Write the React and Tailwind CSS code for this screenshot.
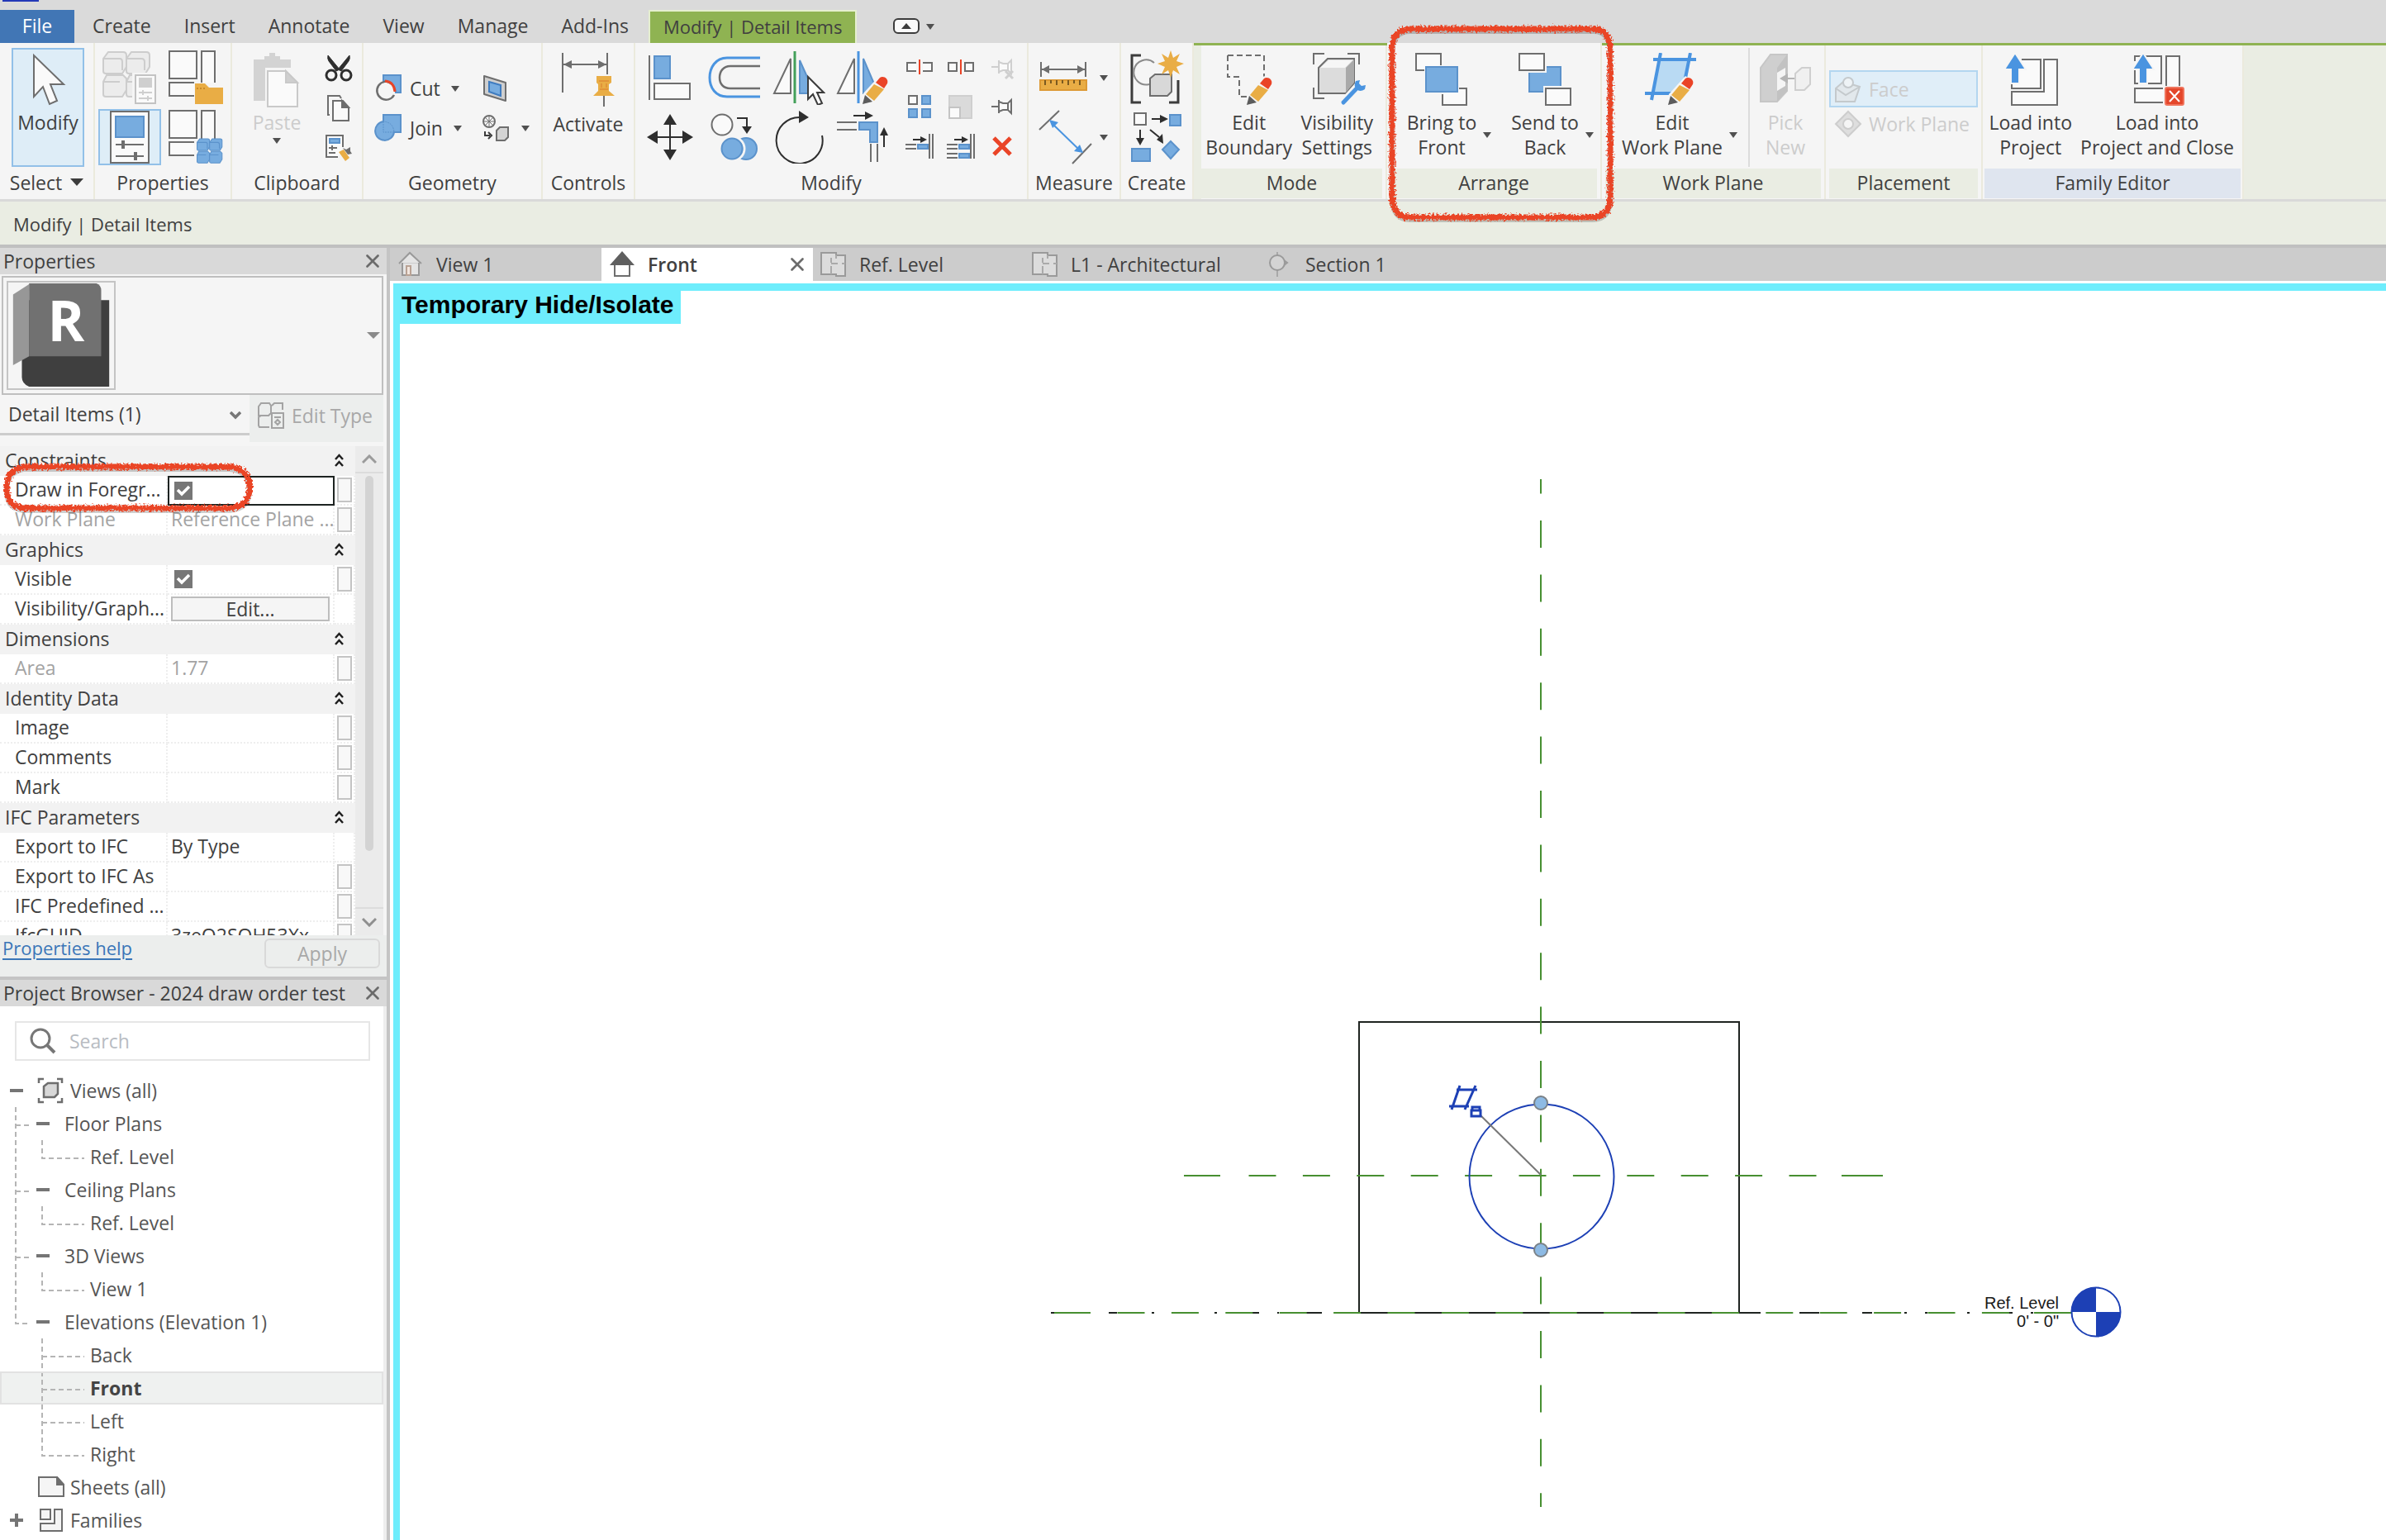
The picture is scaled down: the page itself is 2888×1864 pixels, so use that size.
import { X } from "lucide-react";

const GRAY = "#6e6e6e";
const DARK = "#3c3c3c";
const BLUE = "#77acdf";
const EDGE = "#5b92cb";
const SKY = "#4a94e0";
const GOLD = "#e9ad45";
const RED = "#ea4427";

const tabs = ["Create", "Insert", "Annotate", "View", "Manage", "Add-Ins"];

const properties = [
  { group: "Constraints" },
  { name: "Draw in Foregr...", type: "check", active: true, assoc: true },
  { name: "Work Plane", value: "Reference Plane ...", muted: true, assoc: true },
  { group: "Graphics" },
  { name: "Visible", type: "check", assoc: true },
  { name: "Visibility/Graph...", type: "edit" },
  { group: "Dimensions" },
  { name: "Area", value: "1.77", muted: true, assoc: true },
  { group: "Identity Data" },
  { name: "Image", value: "", assoc: true },
  { name: "Comments", value: "", assoc: true },
  { name: "Mark", value: "", assoc: true },
  { group: "IFC Parameters" },
  { name: "Export to IFC", value: "By Type" },
  { name: "Export to IFC As", value: "", assoc: true },
  { name: "IFC Predefined ...", value: "", assoc: true },
  { name: "IfcGUID", value: "3zeO2SQH53Xx...", assoc: true },
];

const tree = [
  { label: "Floor Plans", depth: 1 },
  { label: "Ref. Level", depth: 2, last: true, trunk: true },
  { label: "Ceiling Plans", depth: 1 },
  { label: "Ref. Level", depth: 2, last: true, trunk: true },
  { label: "3D Views", depth: 1 },
  { label: "View 1", depth: 2, last: true, trunk: true },
  { label: "Elevations (Elevation 1)", depth: 1, last: true },
  { label: "Back", depth: 2 },
  { label: "Front", depth: 2, selected: true },
  { label: "Left", depth: 2 },
  { label: "Right", depth: 2, last: true },
];

function Icon({ w = 64, h = 64, children }) {
  return (
    <svg width={w} height={h} viewBox={`0 0 ${w} ${h}`} fill="none" stroke={GRAY} strokeWidth="2" className="shrink-0" aria-hidden="true">
      {children}
    </svg>
  );
}

function Caret({ wide }) {
  return wide ? (
    <svg width="16" height="10" viewBox="0 0 16 10" className="shrink-0"><path d="M0 0h16L8 9z" fill={DARK} /></svg>
  ) : (
    <svg width="10" height="7" viewBox="0 0 10 7" className="shrink-0"><path d="M0 0h10L5 7z" fill="#505050" /></svg>
  );
}

function Pencil() {
  return (
    <g stroke="none">
      <path d="M29 50L49 28l13 8-1 12-19 16-16 1z" fill="#f5f5f5" />
      <path d="M32 51L42 39l12 6-12 14z" fill={GOLD} />
      <path d="M44 37l5-6c4-3 11 1 9 7l-4 6z" fill={RED} />
      <path d="M28 63l3-11 9 8z" fill="#5c5c5c" />
    </g>
  );
}

/* ---------- ribbon icons ---------- */

const CursorIcon = () => (
  <Icon w={64} h={64}><path d="M15 3v50l11-12 8 21 9-4-8-20h16z" fill="#fafafa" /></Icon>
);

const Cubes = ({ fill, edge, x = 0, y = 0 }) => (
  <g transform={`translate(${x} ${y})`} fill={fill} stroke={edge}>
    <path d="M1 10l6-8h18q4 0 4 4v14l-5 8H4q-3 0-3-3z" />
    <path d="M29 10l6-8h18q4 0 4 4v14l-5 8H32q-3 0-3-3z" />
    <path d="M1 38l4-8h20l4 4v14l-5 8H4q-3 0-3-3z" />
    <path d="M29 38l4-8h20l4 4v14l-5 8H32q-3 0-3-3z" />
    <path d="M1 10h20q3 0 3 4v10M29 10h18q4 0 4 4v10M1 38h20M29 38h20" fill="none" />
  </g>
);

const FamilyTypesIcon = () => (
  <Icon w={66} h={66}>
    <Cubes fill="#ececec" edge="#cdcdcd" />
    <rect x="36" y="27" width="31" height="40" fill="#f5f5f5" stroke="none" />
    <rect x="40" y="30" width="24" height="34" fill="#fafafa" stroke="#c3c3c3" />
    <rect x="44" y="33" width="16" height="12" fill="#cfcfcf" stroke="none" />
    <path d="M44 51h16M44 58h16M49 48v6M55 55v6" stroke="#cfcfcf" />
  </Icon>
);

const PropertiesIcon = () => (
  <Icon w={50} h={66}>
    <rect x="2" y="2" width="46" height="62" fill="#fafafa" />
    <rect x="8" y="8" width="34" height="25" fill={BLUE} stroke={EDGE} />
    <path d="M8 42h34M8 56h34" />
    <path d="M17 37v10M32 51v10" strokeWidth="4" />
  </Icon>
);

const CategoryIcon = ({ children }) => (
  <Icon w={66} h={66}>
    <rect x="1" y="1" width="33" height="33" fill="#fafafa" />
    <path d="M40 39V1h16v38" fill="#fafafa" />
    <path d="M31 55H1V39h30" fill="#fafafa" />
    {children}
  </Icon>
);

const PasteIcon = () => (
  <Icon w={56} h={66}>
    <path d="M0 8h13V4h6V0h7v4h6v4h13v10H14v40H0z" fill="#d3d3d3" stroke="none" />
    <path d="M17 22h22l14 14v29H17z" fill="#fafafa" stroke="#c9c9c9" />
    <path d="M39 22v14h14z" fill="#cfcfcf" stroke="#c9c9c9" />
  </Icon>
);

const ScissorsIcon = () => (
  <Icon w={34} h={34}>
    <path d="M4 1q-1 4 1 7l9 12 4-2zM30 1q1 4-1 7l-9 12-4-2z" fill="#2e2e2e" stroke="#2e2e2e" strokeWidth="1" />
    <circle cx="8" cy="25" r="6" stroke="#2e2e2e" strokeWidth="3" />
    <circle cx="26" cy="25" r="6" stroke="#2e2e2e" strokeWidth="3" />
  </Icon>
);

const CopyIcon = () => (
  <Icon w={34} h={34}>
    <path d="M6 25H4V2h14l2 3" />
    <path d="M10 8h12l7 8v16H10z" fill="#fafafa" />
    <path d="M21 8v8h8z" fill={GRAY} />
  </Icon>
);

const MatchIcon = () => (
  <Icon w={34} h={34}>
    <path d="M16 28H2V2h20v14" fill="#fafafa" />
    <rect x="6" y="6" width="12" height="5" fill={BLUE} stroke={EDGE} />
    <path d="M5 17h10M5 23h8M9 14v6" />
    <path d="M17 22l6-3 7 10-5 4z" fill={GOLD} stroke="none" />
    <path d="M22 17l4 2 5-3v5l2 3-5 1z" fill={GRAY} stroke="none" />
  </Icon>
);

const CutGeometryIcon = () => (
  <Icon w={34} h={34}>
    <path d="M11 1h21v21h-6Q25 10 11 8z" fill={BLUE} stroke={EDGE} />
    <path d="M21 11a11 11 0 1 0 3 14" strokeWidth="2.5" />
    <path d="M13 8q11 1 12 13" stroke={RED} strokeWidth="3" />
  </Icon>
);

const JoinIcon = () => (
  <Icon w={34} h={34}>
    <path d="M11 1h21v21h-8a11.500 11.500 0 1 1-13-13z" fill={BLUE} stroke={EDGE} />
    <path d="M11 9v13h13q-1-12-13-13" stroke={EDGE} strokeDasharray="2 1" strokeWidth="1" />
  </Icon>
);

const WallOpeningIcon = () => (
  <Icon w={34} h={34}>
    <path d="M3 2l26 8v22L3 24z" fill="#cfcfcf" strokeLinejoin="round" />
    <path d="M9 9l14 4v13L9 21z" fill={BLUE} stroke="#3f7cc0" />
  </Icon>
);

const PaintIcon = () => (
  <Icon w={34} h={34}>
    <circle cx="9" cy="9" r="7" fill="#fafafa" />
    <path d="M4 4l10 10M14 4L4 14M9 2v14M2 9h14" strokeWidth="1" />
    <path d="M4 21v5h6M8 22l4 4-4 4" stroke={DARK} />
    <path d="M18 20l4-4h10v12l-4 4H18z" fill="#d4d4d4" />
  </Icon>
);

const ActivateIcon = () => (
  <Icon w={66} h={66}>
    <path d="M2 0v48M56 0v26M2 14h54" />
    <path d="M3 14l10-5v10zM55 14l-10-5v10z" fill={GRAY} stroke="none" />
    <path d="M43 28h18v8l-3 2v8l7 6H39l6-6v-8l-2-2z" fill={GOLD} stroke="none" />
    <path d="M46 34h12M47 44h10M49 37v5M55 37v5" stroke="#d97c2f" strokeWidth="1" />
    <path d="M52 52v13" />
  </Icon>
);

const AlignIcon = () => (
  <Icon w={56} h={56}>
    <path d="M3 1v54" />
    <rect x="9" y="2" width="19" height="27" fill={BLUE} stroke={EDGE} />
    <rect x="9" y="35" width="43" height="19" fill="#fafafa" />
  </Icon>
);

const OffsetIcon = () => (
  <Icon w={66} h={56}>
    <path d="M64 4H24C10 4 3 16 3 28s7 23 21 23h40" stroke={SKY} strokeWidth="3" />
    <path d="M64 14H28c-9 0-13 7-13 14s4 13 13 13h36" strokeWidth="2.500" />
  </Icon>
);

const MirrorPickIcon = () => (
  <Icon w={64} h={66}>
    <path d="M22 10v42H2z" fill="#fafafa" />
    <path d="M33 12l18 40H33z" fill={BLUE} stroke={EDGE} />
    <path d="M27 1v63" stroke="#43a05a" strokeWidth="3" />
    <path d="M43 32v27l6-6 6 13 5-2-6-13h8z" fill="#fff" stroke={DARK} />
  </Icon>
);

const MirrorDrawIcon = () => (
  <Icon w={66} h={66}>
    <path d="M22 10v42H2z" fill="#fafafa" />
    <path d="M33 10l18 42H33z" fill={BLUE} stroke={EDGE} />
    <path d="M27 1v63" stroke={SKY} strokeWidth="3" />
    <g transform="translate(4 2)"><Pencil /></g>
  </Icon>
);

const MoveIcon = () => (
  <Icon w={56} h={56}>
    <path d="M28 6v44M6 28h44" stroke="#2e2e2e" />
    <path d="M28 0l8 13H20zM28 56l8-13H20zM0 28l13-8v16zM56 28l-13-8v16z" fill="#2e2e2e" stroke="none" />
  </Icon>
);

const CopyShapeIcon = () => (
  <Icon w={62} h={58}>
    <circle cx="16" cy="14" r="12.500" fill="#fafafa" />
    <path d="M34 6h12v12" stroke="#2e2e2e" />
    <path d="M40 16h12l-6 9z" fill="#2e2e2e" stroke="none" />
    <circle cx="45" cy="43" r="13" fill={BLUE} stroke={EDGE} />
    <circle cx="29" cy="43" r="14" fill={BLUE} stroke="#f5f5f5" strokeWidth="3" />
    <circle cx="28" cy="43" r="12.500" fill={BLUE} stroke={EDGE} />
  </Icon>
);

const RotateIcon = () => (
  <Icon w={60} h={64}>
    <path d="M58 30a28 28 0 1 1-26-22" stroke="#2e2e2e" />
    <path d="M30 0l12 8-12 7z" fill="#2e2e2e" stroke="none" />
  </Icon>
);

const TrimIcon = () => (
  <Icon w={64} h={64}>
    <path d="M20 6h16" stroke="#2e2e2e" />
    <path d="M34 1l10 5-10 5z" fill="#2e2e2e" stroke="none" />
    <path d="M0 14h24M0 23h24M41 40v22M49 40v22" />
    <path d="M27 14h22v24H40V23H27z" fill={BLUE} stroke={EDGE} />
    <path d="M57 44V28" stroke="#2e2e2e" />
    <path d="M52 30l5-10 5 10z" fill="#2e2e2e" stroke="none" />
  </Icon>
);

const SplitIcon = ({ gap }) => (
  <Icon w={34} h={34}>
    {gap ? (
      <path d="M2 12h10v10H2zM22 12h10v10H22z" fill="#fafafa" />
    ) : (
      <path d="M13 12H2v10h11M21 12h11v10H21" fill="#fafafa" />
    )}
    <path d="M17 8v18" stroke={RED} />
  </Icon>
);

const ArrayIcon = () => (
  <Icon w={34} h={34}>
    <rect x="4" y="4" width="10" height="10" fill="#fafafa" />
    <path d="M20 4h10v10H20zM4 20h10v10H4zM20 20h10v10H20z" fill={BLUE} stroke={EDGE} />
  </Icon>
);

const ScaleIcon = () => (
  <Icon w={34} h={34}>
    <rect x="3" y="4" width="27" height="27" fill="#dadada" stroke="#cfcfcf" />
    <rect x="3" y="18" width="13" height="13" fill="#fafafa" stroke="#c4c4c4" />
  </Icon>
);

const PinIcon = ({ off }) => (
  <Icon w={34} h={34}>
    <g stroke={off ? "#cfcfcf" : GRAY}>
      <path d="M4 17h9M13 9v16M13 11l5 2h6l4-4v16l-4-4h-6l-5 2M24 13v8" fill="#fafafa" />
      {off && <path d="M21 22l9 9M30 22l-9 9" strokeWidth="3" />}
    </g>
  </Icon>
);

const TrimSingleIcon = ({ multi }) => (
  <Icon w={34} h={34}>
    <path d="M9 9h10" stroke="#2e2e2e" />
    <path d="M18 5l8 4-8 4z" fill="#2e2e2e" stroke="none" />
    <path d="M29 2v30M33 2v30" />
    <path d="M0 15h13M0 20h13" />
    <path d="M15 15h12v5H15z" fill={BLUE} stroke={EDGE} />
    {multi && <path d="M0 26h13M0 31h13" />}
    {multi && <path d="M15 26h12v5H15z" fill={BLUE} stroke={EDGE} />}
  </Icon>
);

const DeleteIcon = () => (
  <Icon w={34} h={34}><path d="M7 7l20 20M27 7L7 27" stroke={RED} strokeWidth="5" /></Icon>
);

const RulerIcon = () => (
  <Icon w={60} h={40}>
    <path d="M3 1v18M57 1v18M4 10h52" />
    <path d="M4 10l9-5v10zM56 10l-9-5v10z" fill={GRAY} stroke="none" />
    <rect x="2" y="23" width="56" height="12" fill={GOLD} stroke="#dd9a35" />
    <path d="M8 23v6M15 23v4M22 23v6M29 23v4M36 23v6M43 23v4M50 23v6" stroke="#7b5a20" />
  </Icon>
);

const DimensionIcon = () => (
  <Icon w={66} h={66}>
    <path d="M25 1L1 24M64 41L41 65" />
    <path d="M17 17l32 31" stroke={SKY} />
    <path d="M13 12l11 3-7 7zM54 52l-11-2 7-8z" fill={SKY} stroke="none" />
  </Icon>
);

const CreateGroupIcon = () => (
  <Icon w={66} h={66}>
    <path d="M14 6H3v57h11M48 63h11V36" stroke={DARK} strokeWidth="3" />
    <path d="M30 15a15 15 0 1 0-6 26" stroke="#8a8a8a" />
    <path d="M25 34l6-5h20v21l-5 5H25z" fill="#d8d8d8" />
    <path d="M50 0l3 9 8-5-4 9 9 3-9 4 4 9-8-5-3 9-3-9-8 5 4-9-9-4 9-3-4-9 8 5z" fill={GOLD} stroke="none" />
  </Icon>
);

const CreateSimilarIcon = () => (
  <Icon w={64} h={62}>
    <rect x="5" y="2" width="14" height="14" fill="#fafafa" />
    <rect x="48" y="4" width="13" height="13" fill={BLUE} stroke={EDGE} />
    <path d="M26 9h12M12 22v12M24 22l11 9" stroke="#2e2e2e" />
    <path d="M36 4l10 5-10 5zM7 32h10l-5 9zM32 34l7-7 1 12z" fill="#2e2e2e" stroke="none" />
    <rect x="2" y="45" width="22" height="15" fill={BLUE} stroke={EDGE} />
    <path d="M49 36l10 10-10 11-10-11z" fill={BLUE} stroke={EDGE} />
  </Icon>
);

const EditBoundaryIcon = () => (
  <Icon>
    <path d="M5 3h44v26M5 3v26h14v24h9" strokeDasharray="7 4" />
    <Pencil />
  </Icon>
);

const VisibilityIcon = () => (
  <Icon>
    <path d="M1 14V1h13M42 1h14v13M1 42v13h13" />
    <path d="M7 18L18 7h32v30L40 49H7z" fill="#dcdcdc" />
    <path d="M40 18L50 8v28L40 48z" fill="#a9a9a9" stroke="none" />
    <path d="M9 18L19 9h29l-9 9z" fill="#f6f6f6" stroke="none" />
    <path d="M37 60l18-20" stroke="#f5f5f5" strokeWidth="10" />
    <path d="M37 60l18-19" stroke={SKY} strokeWidth="5" strokeLinecap="round" />
    <path d="M52 34q-3 6 1 10t10 0l1-5-5 1-3-3 1-4z" fill={SKY} stroke="none" />
  </Icon>
);

const BringFrontIcon = () => (
  <Icon>
    <path d="M11 21H1V1h30v14" fill="#fafafa" />
    <path d="M53 43h9v20H33V50" fill="#fafafa" />
    <rect x="13" y="17" width="38" height="30" fill={BLUE} stroke={EDGE} />
  </Icon>
);

const SendBackIcon = () => (
  <Icon>
    <rect x="13" y="17" width="38" height="30" fill={BLUE} stroke={EDGE} />
    <path d="M-1-1h35v25H-1zM30 40h34v24H30z" fill="#f5f5f5" stroke="none" />
    <rect x="1" y="1" width="30" height="20" fill="#fafafa" />
    <rect x="33" y="43" width="30" height="20" fill="#fafafa" />
  </Icon>
);

const WorkPlaneIcon = () => (
  <Icon w={66}>
    <path d="M17 8h38L48 49H9z" fill="#b9daf3" stroke="none" />
    <path d="M10 8h52M0 49h46M19 0L8 57M55 0l-6 30" stroke={SKY} strokeWidth="4" />
    <Pencil />
  </Icon>
);

const PickNewIcon = () => (
  <Icon>
    <path d="M2 18L14 2h20v44L22 59H2z" fill="#cfcfcf" stroke="#c6c6c6" />
    <path d="M22 18L34 2v44L22 59z" fill="#c2c2c2" stroke="none" />
    <path d="M22 24l10-6v22l-10 6z" fill="#f5f5f5" stroke="none" />
    <path d="M30 31h14" stroke="#b5b5b5" />
    <path d="M25 31l10-6v12z" fill="#b5b5b5" stroke="none" />
    <path d="M44 25l8-7h10v20l-7 7H44z" fill="#f0f0f0" stroke="#cfcfcf" />
  </Icon>
);

const FaceIcon = () => (
  <Icon w={34} h={34}>
    <path d="M2 16l9-8 20 6-6 18H2z" fill="#e2e8ec" stroke="#c4c9cc" />
    <path d="M2 16l12 8 17-10" stroke="#c4c9cc" />
    <circle cx="17" cy="9" r="6" fill="#eef3f6" stroke="#c4c9cc" />
  </Icon>
);

const PlaneIcon = () => (
  <Icon w={34} h={34}>
    <path d="M17 2l15 15-15 15L2 17z" fill="#dedede" stroke="#cdcdcd" />
    <circle cx="17" cy="17" r="6" fill="#f5f5f5" stroke="#cdcdcd" />
  </Icon>
);

const LoadIcon = () => (
  <Icon>
    <path d="M20 8h23v35H8v-5M8 47h39V8h16v55H8z" fill="#fafafa" />
    <path d="M12 0l13 20h-8v17H7V20H-1z" fill={SKY} stroke="#f5f5f5" strokeWidth="2" />
  </Icon>
);

const LoadCloseIcon = () => (
  <Icon>
    <path d="M2 10V4h32v33H2V16" fill="#fafafa" />
    <path d="M40 40V4h16v36M36 60H2V43h34" fill="#fafafa" />
    <path d="M12 0l13 20h-8v17H7V20H-1z" fill={SKY} stroke="#f5f5f5" strokeWidth="2" />
    <rect x="39" y="42" width="22" height="21" rx="2" fill="#e4472b" stroke="#f0745c" />
    <path d="M44 46l12 13M56 46L44 59" stroke="#fff" />
  </Icon>
);

/* ---------- ribbon pieces ---------- */

function Group({ title, className, strip, children }) {
  return (
    <section className={`flex flex-col shrink-0 border-r-2 border-[#ebeadd] bg-[#f5f5f5] ${className}`}>
      <div className="flex h-[152px]">{children}</div>
      <h2 className={`flex h-9 items-center justify-center gap-2.5 pb-0.5 whitespace-nowrap ${strip || ""}`}>{title}</h2>
    </section>
  );
}

function BigButton({ icon, lines, caret, disabled, className }) {
  return (
    <button disabled={disabled} className={`flex flex-col items-center pt-3 ${disabled ? "text-[#cccccc]" : ""} ${className || ""}`}>
      {icon}
      <span className="mt-[5px] grid w-full grid-cols-[1fr_auto_1fr] items-center leading-[30px] whitespace-nowrap">
        <span />
        <span>{lines.map((line) => <span key={line} className="block">{line}</span>)}</span>
        <span className="pl-2">{caret && <Caret />}</span>
      </span>
    </button>
  );
}

function IconButton({ label, className, children }) {
  return (
    <button aria-label={label} className={`flex items-center justify-center ${className || ""}`}>{children}</button>
  );
}

function Scribble({ viewBox, className, d, id }) {
  return (
    <svg viewBox={viewBox} className={`pointer-events-none absolute z-10 overflow-visible ${className}`} fill="none" aria-hidden="true">
      <filter id={id} x="-5%" y="-10%" width="110%" height="120%">
        <feTurbulence type="fractalNoise" baseFrequency="0.4" numOctaves="2" seed="4" />
        <feDisplacementMap in="SourceGraphic" scale="8" xChannelSelector="R" yChannelSelector="G" />
      </filter>
      <path d={d} stroke="#00000030" strokeWidth="6" transform="translate(0 3)" />
      <path d={d} stroke={RED} strokeWidth="7" filter={`url(#${id})`} />
    </svg>
  );
}

function Ribbon() {
  return (
    <div className="flex h-[189px] bg-[#eaede3]">
      <Group title={<>Select <Caret wide /></>} className="w-[115px]">
        <div className="flex w-full pt-1.5 pr-[11px] pb-0.5 pl-3.5">
          <button className="flex w-full flex-col items-center border-2 border-[#92c0e8] bg-[#deedf7] pt-1">
            <CursorIcon />
            <span className="mt-[5px] leading-[30px]">Modify</span>
          </button>
        </div>
      </Group>

      <Group title="Properties" className="w-[166px]">
        <div className="grid grid-cols-2 content-start gap-1 px-1 pt-2">
          <IconButton label="Family Types" className="h-[68px] w-[76px]"><FamilyTypesIcon /></IconButton>
          <IconButton label="Family Category" className="h-[68px] w-[76px]">
            <CategoryIcon>
              <path d="M32 40h12l5 5h18v20H32z" fill={GOLD} stroke="none" />
              <path d="M34 46h12" stroke="#c98a2b" strokeDasharray="2 2" />
            </CategoryIcon>
          </IconButton>
          <IconButton label="Properties" className="h-[68px] w-[76px] border-2 border-[#92c0e8] bg-[#deedf7]"><PropertiesIcon /></IconButton>
          <IconButton label="Type Properties" className="h-[68px] w-[76px]">
            <CategoryIcon>
              <g transform="translate(34 34) scale(.54)"><Cubes fill={BLUE} edge={EDGE} /></g>
            </CategoryIcon>
          </IconButton>
        </div>
      </Group>

      <Group title="Clipboard" className="w-[159px]">
        <button disabled className="flex w-[108px] flex-col items-center pt-3 text-[#cccccc]">
          <PasteIcon />
          <span className="mt-[3px] leading-[30px]">Paste</span>
          <span className="mt-1"><Caret /></span>
        </button>
        <div className="flex flex-col gap-[14px] pt-[14px] pl-1">
          <IconButton label="Cut to Clipboard"><ScissorsIcon /></IconButton>
          <IconButton label="Copy to Clipboard"><CopyIcon /></IconButton>
          <IconButton label="Match Type"><MatchIcon /></IconButton>
        </div>
      </Group>

      <Group title="Geometry" className="w-[217px]">
        <div className="grid grid-cols-[130px_auto] content-start gap-y-[14px] pt-[38px] pl-[13px]">
          <button className="flex h-[34px] items-center gap-[9px]"><CutGeometryIcon />Cut<span className="pl-1"><Caret /></span></button>
          <IconButton label="Wall Opening" className="justify-start!"><WallOpeningIcon /></IconButton>
          <button className="flex h-[34px] items-center gap-[9px]"><JoinIcon />Join<span className="pl-1"><Caret /></span></button>
          <IconButton label="Paint" className="justify-start! gap-[14px]"><PaintIcon /><Caret /></IconButton>
        </div>
      </Group>

      <Group title="Controls" className="w-[112px]">
        <BigButton icon={<ActivateIcon />} lines={["Activate"]} className="w-full" />
      </Group>

      <Group title="Modify" className="w-[476px]">
        <div className="grid grid-cols-[78px_78px_78px_78px] grid-rows-[72px_72px] pt-[6px] pl-[3px]">
          <IconButton label="Align"><AlignIcon /></IconButton>
          <IconButton label="Offset"><OffsetIcon /></IconButton>
          <IconButton label="Mirror - Pick Axis"><MirrorPickIcon /></IconButton>
          <IconButton label="Mirror - Draw Axis"><MirrorDrawIcon /></IconButton>
          <IconButton label="Move"><MoveIcon /></IconButton>
          <IconButton label="Copy"><CopyShapeIcon /></IconButton>
          <IconButton label="Rotate"><RotateIcon /></IconButton>
          <IconButton label="Trim/Extend to Corner"><TrimIcon /></IconButton>
        </div>
        <div className="grid grid-cols-[34px_34px_34px] content-start gap-x-4 gap-y-[14px] pt-3 pl-3">
          <IconButton label="Split Element"><SplitIcon /></IconButton>
          <IconButton label="Split with Gap"><SplitIcon gap /></IconButton>
          <IconButton label="Unpin"><PinIcon off /></IconButton>
          <IconButton label="Array"><ArrayIcon /></IconButton>
          <IconButton label="Scale"><ScaleIcon /></IconButton>
          <IconButton label="Pin"><PinIcon /></IconButton>
          <IconButton label="Trim/Extend Single"><TrimSingleIcon /></IconButton>
          <IconButton label="Trim/Extend Multiple"><TrimSingleIcon multi /></IconButton>
          <IconButton label="Delete"><DeleteIcon /></IconButton>
        </div>
      </Group>

      <Group title="Measure" className="w-[112px]">
        <div className="flex w-full flex-col pt-[6px] pl-3">
          <IconButton label="Measure" className="h-[72px] justify-start! gap-[14px]"><RulerIcon /><Caret /></IconButton>
          <IconButton label="Aligned Dimension" className="h-[72px] justify-start! gap-2"><DimensionIcon /><Caret /></IconButton>
        </div>
      </Group>

      <Group title="Create" className="w-[88px]">
        <div className="flex w-full flex-col pt-[6px]">
          <IconButton label="Create Group" className="h-[72px]"><CreateGroupIcon /></IconButton>
          <IconButton label="Create Similar" className="h-[72px]"><CreateSimilarIcon /></IconButton>
        </div>
      </Group>

      <div className="relative flex flex-1 pl-[9px]">
        <div className="absolute inset-x-0 top-0 h-[3px] bg-[#8fb352]" />
        <Group title="Mode" className="w-[225px] pr-1" strip="bg-[#eaede3]">
          <BigButton icon={<EditBoundaryIcon />} lines={["Edit", "Boundary"]} className="w-[118px]" />
          <BigButton icon={<VisibilityIcon />} lines={["Visibility", "Settings"]} className="w-[98px]" />
        </Group>

        <div className="relative flex">
          <Group title="Arrange" className="w-[260px] px-1" strip="bg-[#eaede3]">
            <BigButton icon={<BringFrontIcon />} lines={["Bring to", "Front"]} caret className="w-[124px]" />
            <BigButton icon={<SendBackIcon />} lines={["Send to", "Back"]} caret className="w-[126px]" />
          </Group>
          <Scribble
            id="rough-arrange"
            viewBox="0 0 272 234"
            className="-top-5 left-0 h-[234px] w-[272px]"
            d="M24 3h226q20 0 20 26v176q0 26-22 26H28Q6 231 6 203V29Q6 3 28 3z"
          />
        </div>

        <Group title="Work Plane" className="w-[271px] px-1" strip="bg-[#eaede3]">
          <BigButton icon={<WorkPlaneIcon />} lines={["Edit", "Work Plane"]} caret className="w-[162px]" />
          <div className="mt-[6px] mb-0.5 ml-[11px] w-0.5 bg-[#dcdcdc]" />
          <BigButton icon={<PickNewIcon />} lines={["Pick", "New"]} disabled className="flex-1" />
        </Group>

        <Group title="Placement" className="w-[190px] px-1" strip="bg-[#eaede3]">
          <div className="flex w-full flex-col pt-[33px] text-[#cccccc]">
            <button disabled className="flex h-[45px] items-center gap-2 border-2 border-[#b3d6f0] bg-[#e0eef8] pl-1"><FaceIcon />Face</button>
            <button disabled className="flex h-10 items-center gap-2 pl-1.5 whitespace-nowrap"><PlaneIcon />Work Plane</button>
          </div>
        </Group>

        <Group title="Family Editor" className="w-[316px] px-0.5" strip="bg-[#dfe5ef]">
          <BigButton icon={<LoadIcon />} lines={["Load into", "Project"]} className="w-[114px]" />
          <BigButton icon={<LoadCloseIcon />} lines={["Load into", "Project and Close"]} className="w-[196px]" />
        </Group>
      </div>
    </div>
  );
}

/* ---------- properties palette ---------- */

function CheckBox({ id }) {
  return (
    <span className="relative block size-[22px]">
      <input id={id} type="checkbox" defaultChecked className="block size-[22px] appearance-none bg-[#777777]" />
      <svg viewBox="0 0 22 22" className="pointer-events-none absolute inset-0" fill="none"><path d="M4 10l5 5 9-9" stroke="#fff" strokeWidth="3.500" /></svg>
    </span>
  );
}

function PropertyRow({ row }) {
  const id = "prop-" + row.name.replace(/\W/g, "");
  const cell = "border-r-2 border-b-2 border-dotted border-[#eeeeee]";
  return (
    <tr className={`h-9 bg-white ${row.muted ? "text-[#a3a3a3]" : ""}`}>
      <th scope="row" className={`${cell} w-[203px] pb-0.5 pl-[18px] text-left leading-[30px] font-normal whitespace-nowrap`}>
        <label htmlFor={id}>{row.name}</label>
      </th>
      {row.type === "check" && (
        <td className={row.active ? "border-2 border-[#1d2321] pl-1.5" : `${cell} pl-2`}><CheckBox id={id} /></td>
      )}
      {row.type === "edit" && (
        <td className={`${cell} px-1`}>
          <button id={id} className="block h-[30px] w-full border-2 border-[#bdbdbd] bg-[#f5f5f5] leading-[26px]">Edit...</button>
        </td>
      )}
      {!row.type && (
        <td className={cell}>
          <input id={id} defaultValue={row.value} disabled={row.muted} className="block h-[34px] w-full bg-transparent pb-[3px] pl-1" />
        </td>
      )}
      <td className={`${cell} w-[25px] pl-[3px]`}>
        {row.assoc && <button aria-label="Associate family parameter" className="block h-[30px] w-[18px] border-2 border-[#c4c4c4] bg-[#f8f8f8]" />}
      </td>
    </tr>
  );
}

function PaletteHeader({ title }) {
  return (
    <div className="flex h-8 shrink-0 items-center justify-between bg-[#d9d9d9] pr-1 pl-1">
      <h2 className="whitespace-nowrap">{title}</h2>
      <button aria-label="Close"><X size={26} strokeWidth={2.5} color="#6b6b6b" /></button>
    </div>
  );
}

function PropertiesPalette() {
  return (
    <section className="relative bg-[#f5f5f5]">
      <PaletteHeader title="Properties" />
      <div className="mx-0.5 mt-0.5 mr-1 flex h-[144px] items-center justify-between border-2 border-[#bfbfbf] pr-0.5 pl-1">
        <svg width="132" height="132" viewBox="0 0 132 132" className="border-2 border-[#c4c4c4]" aria-hidden="true">
          <path d="M17 90V22h109v108H26q-9-4-9-12z" fill="#3f3f3f" />
          <path d="M6 15L26 2v90L6 103z" fill="#979797" />
          <path d="M26 1h84q6 2 6 9v82H26z" fill="#717171" />
          <text x="49" y="73" fill="#fff" fontSize="70" fontWeight="700" fontFamily="Open Sans">R</text>
        </svg>
        <svg width="16" height="8" viewBox="0 0 16 8"><path d="M0 0h16L8 8z" fill="#8a8a8a" /></svg>
      </div>
      <div className="flex h-[62px] items-start">
        <div className="relative w-[302px] border-b-[3px] border-[#cccccc]">
          <select aria-label="Element filter" className="h-[46px] w-full appearance-none bg-transparent pl-[10px]">
            <option>Detail Items (1)</option>
          </select>
          <svg width="14" height="10" viewBox="0 0 14 10" className="pointer-events-none absolute top-[20px] right-[10px]" fill="none"><path d="M1 1l6 6 6-6" stroke="#777" strokeWidth="3.500" /></svg>
        </div>
        <button disabled className="flex h-[57px] w-[162px] items-center gap-[9px] bg-[#eceeed] pb-2 pl-[10px] whitespace-nowrap text-[#a8a8a8]">
          <svg width="32" height="32" viewBox="0 0 32 32" fill="none" stroke="#a3a3a3" strokeWidth="2">
            <path d="M1 5l3-4h10l2 3v9l-3 3H1zM17 4l3-3h10v8M14 30H2l-1-2V18l3-2h10" />
            <rect x="17" y="13" width="14" height="18" />
            <path d="M20 18h8M24 21l3 3-3 3-3-3z" />
          </svg>
          Edit Type
        </button>
      </div>
      <div className="mr-1 flex h-[592px] overflow-hidden">
        <table className="w-[430px] table-fixed border-separate border-spacing-0">
          <colgroup><col className="w-[203px]" /><col className="w-[202px]" /><col className="w-[25px]" /></colgroup>
          <tbody>
            {properties.map((row) =>
              row.group ? (
                <tr key={row.group} className="h-9 bg-[#f2f2f2]">
                  <th colSpan={3} className="pr-[14px] pb-0.5 pl-1.5 text-left font-normal">
                    <span className="flex items-center justify-between">
                      {row.group}
                      <svg width="11" height="17" viewBox="0 0 11 17" fill="none"><path d="M1 7l4.500-5L10 7M1 15l4.500-5 4.500 5" stroke="#1f1f1f" strokeWidth="2.500" /></svg>
                    </span>
                  </th>
                </tr>
              ) : (
                <PropertyRow key={row.name} row={row} />
              )
            )}
          </tbody>
        </table>
        <div className="flex w-[34px] flex-col items-center bg-[#ebebeb]">
          <button aria-label="Scroll up" className="flex h-[33px] w-full items-center justify-center border-b-2 border-[#dcdcdc]">
            <svg width="18" height="12" viewBox="0 0 18 12" fill="none"><path d="M1 10l8-8 8 8" stroke="#9b9b9b" strokeWidth="3" /></svg>
          </button>
          <div className="mt-[3px] h-[454px] w-[10px] rounded-full bg-[#d3d3d3]" />
          <button aria-label="Scroll down" className="mt-auto flex h-[34px] w-full items-center justify-center border-t-2 border-[#dcdcdc]">
            <svg width="18" height="12" viewBox="0 0 18 12" fill="none"><path d="M1 2l8 8 8-8" stroke="#8f8f8f" strokeWidth="3" /></svg>
          </button>
        </div>
      </div>
      <div className="flex h-[50px] items-start justify-between bg-[#eceeed] pr-2 pl-[3px]">
        <a href="#help" className="text-[22px] leading-[30px] text-[#3a76b8] underline underline-offset-4">Properties help</a>
        <button disabled className="mt-1 h-9 w-[140px] rounded-md border-2 border-[#d9d9d9] text-[#a8a8a8]">Apply</button>
      </div>
      <Scribble
        id="rough-property"
        viewBox="0 0 304 58"
        className="top-[261px] left-[4px] h-[58px] w-[304px]"
        d="M24 4h250q24 2 24 26 0 22-24 24H24Q4 52 4 30T24 4z"
      />
    </section>
  );
}

/* ---------- project browser ---------- */

function Branch({ row }) {
  const isChild = row.depth === 2;
  return (
    <svg width={isChild ? 102 : 38} height="40" className="shrink-0" stroke="#b5b5b5" strokeWidth="2" fill="none" aria-hidden="true">
      {!isChild && <path d={row.last ? "M19 0v22h17" : "M19 0v40M19 22h17"} strokeDasharray="6 4" />}
      {row.trunk && <path d="M19 0v40" strokeDasharray="6 4" />}
      {isChild && <path d={row.last ? "M51 0v22h51" : "M51 0v40M51 22h51"} strokeDasharray="6 4" />}
    </svg>
  );
}

function Toggle({ open }) {
  return (
    <svg width="16" height="16" viewBox="0 0 16 16" className="shrink-0" aria-hidden="true">
      <path d={open ? "M0 8h16" : "M0 8h16M8 0v16"} stroke="#757575" strokeWidth="4" />
    </svg>
  );
}

function ProjectBrowser() {
  return (
    <section className="flex min-h-0 flex-1 flex-col overflow-hidden border-t-4 border-[#c4c4c4]">
      <PaletteHeader title="Project Browser - 2024 draw order test" />
      <div className="mr-1 flex-1 bg-white">
        <div className="px-[18px] pt-[18px]">
          <label className="mr-[-2px] flex h-12 items-center gap-4 border-2 border-[#e6e6e6] pl-4">
            <svg width="32" height="32" viewBox="0 0 32 32" fill="none" stroke="#777"><circle cx="13" cy="13" r="11" strokeWidth="3" /><path d="M21 21l9 9" strokeWidth="4" /></svg>
            <input type="search" placeholder="Search" aria-label="Search" className="min-w-0 flex-1 bg-transparent placeholder:text-[#b8bcc2]" />
          </label>
        </div>
        <ul className="mt-4 text-[#555555]">
          <li className="flex h-10 items-center pl-3">
            <Toggle open />
            <svg width="32" height="32" viewBox="0 0 32 32" className="mr-2 ml-[17px]" fill="none" stroke={GRAY} strokeWidth="2.500">
              <path d="M2 7V2h6M24 2h6v5M2 25v5h6M24 30h6v-5" />
              <path d="M8 11l5-4h12v13l-4 4H8z" fill="#d8d8d8" />
            </svg>
            Views (all)
          </li>
          {tree.map((row, index) => (
            <li key={index} className={`flex h-10 items-center ${row.selected ? "bg-[#eff1f0] font-bold text-[#444444] outline-2 -outline-offset-2 outline-[#e2e2e2]" : ""}`}>
              <Branch row={row} />
              {row.depth === 1 && <span className="mr-[18px] ml-1.5"><Toggle open /></span>}
              <span className={row.depth === 2 ? "pl-[7px]" : ""}>{row.label}</span>
            </li>
          ))}
          <li className="flex h-10 items-center pl-[46px]">
            <svg width="32" height="26" viewBox="0 0 32 26" className="mr-[7px]" fill="#f5f5f5" stroke={GRAY} strokeWidth="2"><path d="M1 1h22l8 9v14H1z" /><path d="M23 1v9h8z" fill={GRAY} /></svg>
            Sheets (all)
          </li>
          <li className="flex h-10 items-center pl-3">
            <Toggle />
            <svg width="28" height="28" viewBox="0 0 28 28" className="mr-[9px] ml-5" fill="#f5f5f5" stroke={GRAY} strokeWidth="2"><path d="M1 1h12v12H1zM18 1h9v26H1v-9h17z" /></svg>
            Families
          </li>
        </ul>
      </div>
    </section>
  );
}

/* ---------- drawing area ---------- */

const HomeViewIcon = () => (
  <Icon w={32} h={32}>
    <path d="M2 15L15 2l14 13M6 14v15h20V14" fill="#e4e4e4" stroke="#999" />
    <path d="M11 18h5v11h-5z" stroke="#b9a294" fill="#f2e6de" />
  </Icon>
);
const ElevationIcon = () => (
  <Icon w={32} h={32}>
    <path d="M7 16h18v14H7z" fill="#fff" />
    <path d="M16 0l15 17H1z" fill="#5f5f5f" stroke="none" />
  </Icon>
);
const PlanViewIcon = () => (
  <Icon w={32} h={32}>
    <path d="M1 2h18v3h11v25H19v-2H1z" fill="#dcdcdc" stroke="#9a9a9a" />
    <path d="M19 5v4M13 8v6M13 18v10M13 15h8M26 15h4" stroke="#aaa" />
  </Icon>
);
const SectionIcon = () => (
  <Icon w={32} h={32}>
    <path d="M13 1v30" stroke="#a8a8a8" />
    <path d="M13 5l12 9-12 9" fill="#b0b0b0" stroke="#9a9a9a" />
    <circle cx="13" cy="14" r="9" fill="#d4d4d4" stroke="#9a9a9a" />
  </Icon>
);

const views = [
  { label: "View 1", icon: <HomeViewIcon /> },
  { label: "Front", icon: <ElevationIcon />, active: true },
  { label: "Ref. Level", icon: <PlanViewIcon /> },
  { label: "L1 - Architectural", icon: <PlanViewIcon />, wide: true },
  { label: "Section 1", icon: <SectionIcon /> },
];

function Drawing() {
  return (
    <svg viewBox="484 352 2404 1512" className="block h-auto w-full" fill="none" strokeWidth="2">
      <rect x="1645" y="1237" width="460" height="352" stroke="#1f2421" />
      <path
        d="M1272 1589h4M1342 1589h10M1394 1589h3M1470 1589h3M1516 1589h8M1546 1589h2M1580 1589h20M2105 1589h26M2178 1589h24M2254 1589h12M2305 1589h3M2330 1589h3M2381 1589h3M2430 1589h6M2458 1589h3"
        stroke="#1f2421"
      />
      <g stroke="#478f31">
        <path d="M1865 580v1244" strokeDasharray="33 32.400" strokeDashoffset="15.400" />
        <path d="M1433 1423h44M2229 1423h50" />
        <path d="M1511.500 1423H2200" strokeDasharray="33 32.400" />
        <path d="M1276 1589h44M2462 1589h46" />
        <path d="M1352.500 1589H2436" strokeDasharray="33 32.400" />
      </g>
      <circle cx="1866" cy="1424" r="87.500" stroke="#1d40b5" />
      <path d="M1792 1350l73 72" stroke="#777" />
      <path d="M1763 1319h25M1754 1339h24M1767 1314l-10 29M1786 1314l-13 29" stroke="#1d40b5" strokeWidth="3" />
      <path d="M1781 1344h11v7h-11zM1782 1344v-4h9v4" stroke="#1d40b5" strokeWidth="3" />
      <circle cx="1865" cy="1335" r="8" fill="#8dbae4" stroke="#7a8187" />
      <circle cx="1865" cy="1513" r="8" fill="#8dbae4" stroke="#7a8187" />
      <circle cx="2537" cy="1588" r="29.500" fill="#fff" stroke="#1d40b5" />
      <path d="M2537 1588h-30a30 30 0 0 1 30-30zM2537 1588h30a30 30 0 0 1-30 30z" fill="#1d40b5" />
      <g fill="#1a1a1a" fontFamily="Liberation Sans" fontSize="20" textAnchor="end">
        <text x="2492" y="1584">Ref. Level</text>
        <text x="2492" y="1606">0' - 0"</text>
      </g>
    </svg>
  );
}

function ViewArea() {
  return (
    <main className="flex min-w-0 flex-1 flex-col">
      <nav className="flex h-10 bg-[#cccccc]">
        {views.map((view) => (
          <div key={view.label} className={`flex items-center pr-1.5 pl-[9px] ${view.wide ? "w-[284px]" : "w-64"} ${view.active ? "bg-white font-semibold" : ""}`}>
            <button className="flex flex-1 items-center gap-[15px] whitespace-nowrap">{view.icon}{view.label}</button>
            {view.active && <button aria-label="Close view"><X size={26} strokeWidth={2.5} color="#6b6b6b" /></button>}
          </div>
        ))}
      </nav>
      <div className="relative ml-1 mt-[3px] flex-1 overflow-hidden border-t-[9px] border-l-8 border-[#6eedfc]">
        <h1 className="absolute top-0 left-0 bg-[#6eedfc] pr-2 pb-1.5 pl-0.5 font-['Liberation_Sans',sans-serif] text-[30px] leading-[34px] font-bold text-black">
          Temporary Hide/Isolate
        </h1>
        <Drawing />
      </div>
    </main>
  );
}

export default function App() {
  return (
    <div className="flex h-screen flex-col overflow-hidden bg-white font-['Open_Sans','Noto_Sans',sans-serif] text-[23px] leading-8 text-[#404040]">
      <header>
        <div className="h-3 bg-[#dadada]"><div className="ml-[3px] h-0.5 w-11 bg-[#2338b8]" /></div>
        <nav className="flex h-10 items-stretch bg-[#dadada] leading-[30px]">
          <button className="mr-0.5 w-[90px] bg-[#4176b5] pb-0.5 text-white">File</button>
          {tabs.map((tab) => (
            <button key={tab} className="px-5 pb-0.5">{tab}</button>
          ))}
          <button className="ml-1 border-2 border-b-0 border-[#e5efcf] bg-[#8fb352] px-4 pb-0.5 text-[22px]">Modify | Detail Items</button>
          <button aria-label="Minimize ribbon" className="ml-11 flex items-center gap-2">
            <svg width="32" height="20" viewBox="0 0 32 20"><rect x="1" y="1" width="30" height="17" rx="5" fill="#fafafa" stroke={DARK} strokeWidth="2" /><path d="M10 13h12l-6-7z" fill={DARK} /></svg>
            <Caret />
          </button>
        </nav>
        <Ribbon />
        <div className="h-[55px] border-t-[3px] border-[#d9d9d9] bg-[#eaede3] pl-4 text-[22px] leading-[54px]">Modify | Detail Items</div>
        <div className="h-1 bg-[#c0c0c0]" />
      </header>
      <div className="flex min-h-0 flex-1">
        <aside className="flex w-[472px] shrink-0 flex-col border-r-4 border-[#c4c4c4] bg-[#eeeeee]">
          <PropertiesPalette />
          <ProjectBrowser />
        </aside>
        <ViewArea />
      </div>
    </div>
  );
}
